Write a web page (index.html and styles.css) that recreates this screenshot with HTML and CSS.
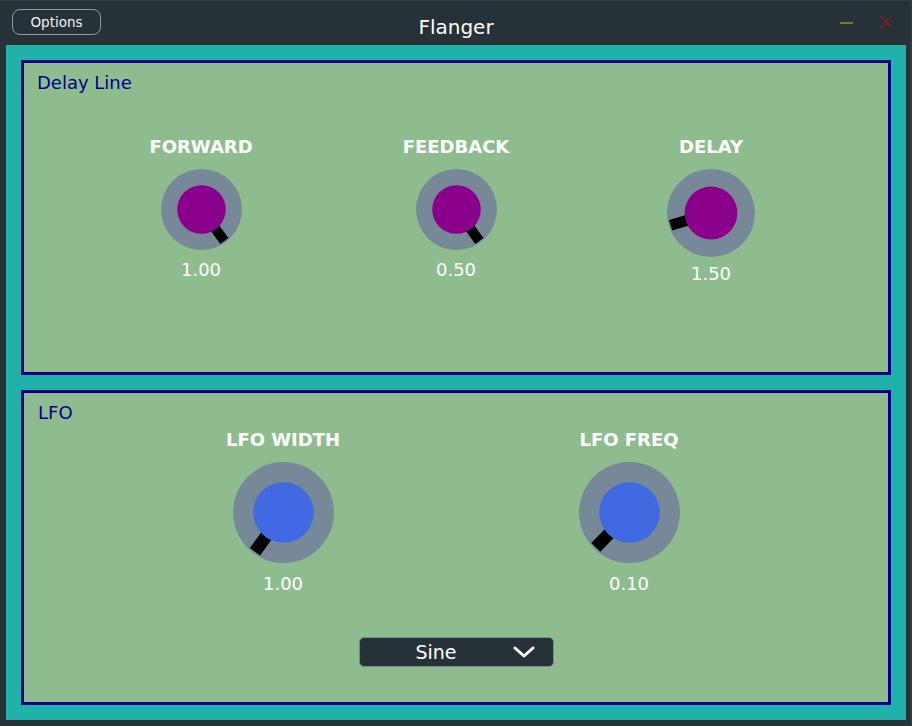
FILE: index.html
```html
<!DOCTYPE html>
<html>
<head>
<meta charset="utf-8">
<title>Flanger</title>
<link rel="stylesheet" href="styles.css">
</head>
<body>
<div class="window">
  <header class="titlebar">
    <div class="tb-left"><button class="options">Options</button></div>
    <div class="title">Flanger</div>
    <div class="tb-right">
      <svg class="min-btn" width="13" height="4" viewBox="0 0 13 4"><rect x="0" y="1" width="13" height="2" fill="#7d7a2c"/></svg>
      <svg class="close-btn" width="14" height="14" viewBox="0 0 14 14"><path d="M1 1 L13 13 M13 1 L1 13" stroke="#7a1e2a" stroke-width="1.6" fill="none"/></svg>
    </div>
  </header>
  <main class="content">
    <section class="panel">
      <div class="panel-title pt-delay">Delay Line</div>
      <div class="knob-row row-delay">
        <div class="knob-col col3">
          <div class="knob-label">FORWARD</div>
          <svg class="knob" width="81" height="81" viewBox="-50 -50 100 100">
            <circle r="50" fill="#778899"/>
            <rect x="-6.25" y="-48" width="12.5" height="28" fill="#000" transform="rotate(144)"/>
            <circle r="30" fill="#8b008b"/>
          </svg>
          <div class="knob-value v-small">1.00</div>
        </div>
        <div class="knob-col col3">
          <div class="knob-label">FEEDBACK</div>
          <svg class="knob" width="81" height="81" viewBox="-50 -50 100 100">
            <circle r="50" fill="#778899"/>
            <rect x="-6.25" y="-48" width="12.5" height="28" fill="#000" transform="rotate(144)"/>
            <circle r="30" fill="#8b008b"/>
          </svg>
          <div class="knob-value v-small">0.50</div>
        </div>
        <div class="knob-col col3">
          <div class="knob-label">DELAY</div>
          <svg class="knob" width="88" height="88" viewBox="-50 -50 100 100">
            <circle r="50" fill="#778899"/>
            <rect x="-6.25" y="-48" width="12.5" height="28" fill="#000" transform="rotate(-107)"/>
            <circle r="30" fill="#8b008b"/>
          </svg>
          <div class="knob-value v-mid">1.50</div>
        </div>
      </div>
    </section>
    <section class="panel">
      <div class="panel-title pt-lfo">LFO</div>
      <div class="knob-row row-lfo">
        <div class="knob-col col2">
          <div class="knob-label">LFO WIDTH</div>
          <svg class="knob" width="101" height="101" viewBox="-50 -50 100 100">
            <circle r="50" fill="#778899"/>
            <rect x="-6.25" y="-48" width="12.5" height="28" fill="#000" transform="rotate(-144)"/>
            <circle r="30" fill="#4169e1"/>
          </svg>
          <div class="knob-value v-big">1.00</div>
        </div>
        <div class="knob-col col2">
          <div class="knob-label">LFO FREQ</div>
          <svg class="knob" width="101" height="101" viewBox="-50 -50 100 100">
            <circle r="50" fill="#778899"/>
            <rect x="-6.25" y="-48" width="12.5" height="28" fill="#000" transform="rotate(-136)"/>
            <circle r="30" fill="#4169e1"/>
          </svg>
          <div class="knob-value v-big">0.10</div>
        </div>
      </div>
      <div class="dropdown">
        <span class="dd-text">Sine</span>
        <svg class="dd-arrow" width="22" height="12" viewBox="0 0 22 12"><path d="M2 2 L11 10 L20 2" stroke="#ffffff" stroke-width="3" fill="none" stroke-linecap="round" stroke-linejoin="round"/></svg>
      </div>
    </section>
  </main>
</div>
</body>
</html>
```

FILE: styles.css
```css
html, body {
  margin: 0;
  padding: 0;
  background: #263238;
}

body {
  font-family: "DejaVu Sans", "Liberation Sans", sans-serif;
  color: #ffffff;
}

.window {
  width: 912px;
  height: 726px;
  box-sizing: border-box;
  background: #263238;
  box-shadow: inset 0 1px 0 #343e44, inset -2px 0 0 #2f393f;
  display: flex;
  flex-direction: column;
}

.titlebar {
  height: 45px;
  flex: none;
  display: grid;
  grid-template-columns: 1fr auto 1fr;
  align-items: start;
}

.tb-left {
  padding: 9px 0 0 12px;
}

.options {
  width: 89px;
  height: 26px;
  box-sizing: border-box;
  border: 1.5px solid #9299a0;
  border-radius: 8px;
  background: transparent;
  color: #f2f2f2;
  font-family: "DejaVu Sans", sans-serif;
  font-size: 13.5px;
  line-height: 16px;
  padding: 0;
  display: flex;
  align-items: center;
  justify-content: center;
}

.title {
  margin-top: 15px;
  font-size: 20px;
  line-height: 24px;
  color: #ffffff;
}

.tb-right {
  display: flex;
  justify-content: flex-end;
  align-items: flex-start;
  padding: 16px 19px 0 0;
}

.min-btn {
  margin-top: 5px;
  margin-right: 26px;
}

.close-btn {
  margin-top: -1px;
}

.content {
  flex: none;
  height: 675px;
  margin: 0 6px;
  box-sizing: border-box;
  background: #20b2aa;
  padding: 15px;
  display: flex;
  flex-direction: column;
  gap: 15px;
}

.panel {
  height: 315px;
  box-sizing: border-box;
  border: 3px solid #00008b;
  background: #8fbc8f;
  display: flex;
  flex-direction: column;
}

.panel-title {
  margin-top: 9px;
  font-size: 18px;
  line-height: 22px;
  color: #00008b;
}

.pt-delay {
  padding-left: 13px;
}

.pt-lfo {
  padding-left: 14px;
}

.knob-row {
  display: flex;
  justify-content: center;
}

.row-delay {
  margin-top: 42px;
}

.row-lfo {
  margin-top: 5px;
}

.knob-col {
  display: flex;
  flex-direction: column;
  align-items: center;
}

.col3 {
  width: 255px;
}

.col2 {
  width: 346px;
}

.knob-label {
  font-size: 18px;
  font-weight: bold;
  line-height: 22px;
  color: #ffffff;
}

.knob {
  display: block;
  margin-top: 11px;
}

.knob-value {
  font-size: 18px;
  line-height: 22px;
  color: #ffffff;
}

.v-small {
  margin-top: 9px;
}

.v-mid {
  margin-top: 6px;
}

.v-big {
  margin-top: 10px;
}

.dropdown {
  margin: 42px auto 0;
  width: 195px;
  height: 30px;
  box-sizing: border-box;
  background: #263238;
  border: 1.5px solid #7f868b;
  border-radius: 5px;
  display: flex;
  align-items: center;
}

.dd-text {
  flex: 1;
  text-align: center;
  font-size: 19px;
  line-height: 22px;
  color: #ffffff;
}

.dd-arrow {
  display: block;
  margin-right: 18px;
}
```
